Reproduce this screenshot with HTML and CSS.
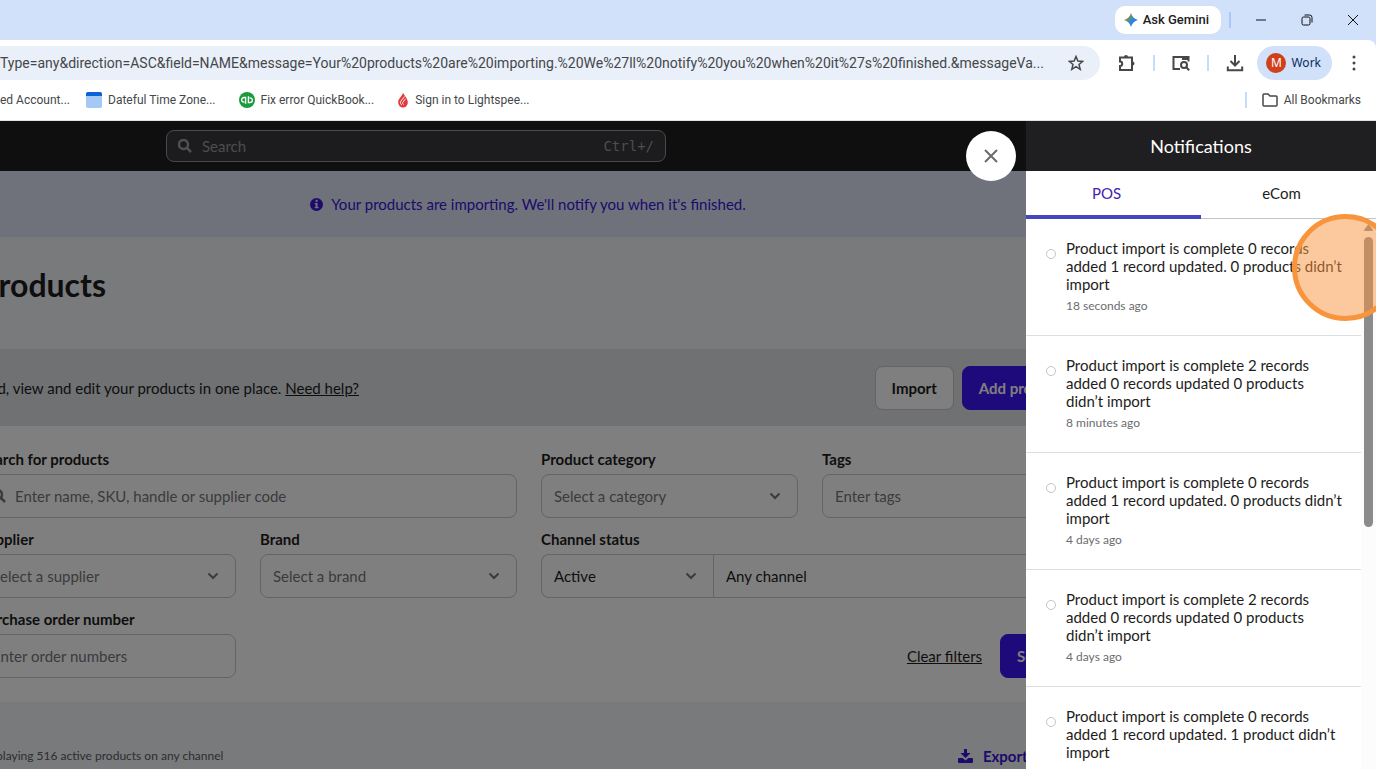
FILE: index.html
```html
<!DOCTYPE html>
<html lang="en">
<head>
  <meta charset="UTF-8">
  <meta name="viewport" content="width=device-width, initial-scale=1">
  <title>Products</title>
  <link rel="stylesheet" href="styles.css">
</head>
<body>

<!-- Browser window -->
<div class="titlebar">
  <button class="gemini">
    <svg width="14" height="14" viewBox="0 0 14 14">
      <defs>
        <linearGradient id="spark" x1="0" y1="0" x2="1" y2="1">
          <stop offset="0.2" stop-color="#e8556d"/>
          <stop offset="0.4" stop-color="#4f9a6a"/>
          <stop offset="0.550" stop-color="#2f86e8"/>
          <stop offset="1" stop-color="#2f62e8"/>
        </linearGradient>
      </defs>
      <path fill="url(#spark)" d="M7 0c1 3.600 3.400 6 7 7-3.600 1-6 3.400-7 7-1-3.600-3.400-6-7-7 3.600-1 6-3.400 7-7z"/>
    </svg>
    Ask Gemini
  </button>
  <span class="divider"></span>
  <div class="window-buttons">
    <button aria-label="Minimize"><svg width="12" height="12" viewBox="0 0 12 12"><path d="M1 6h10"/></svg></button>
    <button aria-label="Restore"><svg width="12" height="12" viewBox="0 0 12 12"><rect x="1" y="3" width="8" height="8" rx="1.500"/><path d="M3.500 1h5A2.500 2.500 0 0 1 11 3.500v5"/></svg></button>
    <button aria-label="Close window"><svg width="12" height="12" viewBox="0 0 12 12"><path d="M1 1l10 10M11 1L1 11"/></svg></button>
  </div>
</div>

<div class="toolbar">
  <div class="omnibox">
    <input type="text" aria-label="Address" value="Type=any&amp;direction=ASC&amp;field=NAME&amp;message=Your%20products%20are%20importing.%20We%27ll%20notify%20you%20when%20it%27s%20finished.&amp;messageVa...">
    <button aria-label="Bookmark this page"><svg width="16" height="16" viewBox="0 0 16 16"><path d="M8 1.500l1.900 4.500 4.800.4-3.700 3.100 1.200 4.800L8 11.700l-4.200 2.600L5 9.500 1.300 6.400 6.100 6z"/></svg></button>
  </div>
  <button aria-label="Extensions"><svg width="18" height="18" viewBox="0 0 18 18"><path d="M2 3.500h12v12.500H2v-4a2.200 2.200 0 0 0 0-4.400z"/><path class="solid" d="M6 3a2 2 0 0 1 4 0zM14.500 7.500a2 2 0 0 1 0 4z"/></svg></button>
  <span class="divider"></span>
  <button aria-label="Lens search"><svg width="18" height="18" viewBox="0 0 18 18"><path d="M8 15H1.500V3h15v4.500"/><path class="solid" d="M10 2h7v4h-7z"/><circle cx="12" cy="11" r="3"/><path d="M14.200 13.200l3 3"/></svg></button>
  <span class="divider"></span>
  <button aria-label="Downloads"><svg width="18" height="18" viewBox="0 0 18 18"><path d="M9 1v10M4.500 7L9 11.500 13.500 7M1.800 12.500v3.700h14.400v-3.700"/></svg></button>
  <button class="profile"><span class="avatar">M</span>Work</button>
  <button class="dots" aria-label="Menu"><svg width="18" height="18" viewBox="0 0 18 18"><circle cx="9" cy="3" r="1.500"/><circle cx="9" cy="9" r="1.500"/><circle cx="9" cy="15" r="1.500"/></svg></button>
</div>

<nav class="bookmarks">
  <a href="#">ed Account...</a>
  <a href="#">
    <svg width="16" height="16" viewBox="0 0 16 16"><rect width="16" height="16" rx="2" fill="#a5c8f5"/><path fill="#0b62d6" d="M2 0h12a2 2 0 0 1 2 2v2H0V2a2 2 0 0 1 2-2z"/></svg>
    Dateful Time Zone...
  </a>
  <a href="#">
    <svg width="16" height="16" viewBox="0 0 16 16"><circle cx="8" cy="8" r="8" fill="#1a9b3c"/><g fill="none" stroke="#fff" stroke-width="1.300"><path d="M6.600 11.800V5.500H5a2.300 2.300 0 0 0 0 4.700h.6"/><path d="M9.400 4.200v6.300H11a2.300 2.300 0 0 0 0-4.700h-.6"/></g></svg>
    Fix error QuickBook...
  </a>
  <a href="#">
    <svg width="12" height="16" viewBox="0 0 12 16"><path fill="#e03a3a" d="M6 .5c.5 2.500 4.800 5.500 4.800 9.700A4.800 5 0 0 1 6 15.500a4.800 5 0 0 1-4.800-5.300C1.200 6.500 5.500 4 6 .5z"/><path fill="none" stroke="#fff" stroke-width=".9" d="M7.500 4.500L3.800 9.200c-.8 1.800 0 3.300 1.200 4M8.500 6.800l-2.700 3.400c-.6 1.200 0 2 .9 2.300"/></svg>
    Sign in to Lightspee...
  </a>
  <span class="divider"></span>
  <a class="all" href="#">
    <svg width="16" height="14" viewBox="0 0 16 14"><path fill="none" stroke="#45474a" stroke-width="1.500" d="M1 2.500V12q0 1 1 1h12q1 0 1-1V4q0-1-1-1H8L6 1H2Q1 1 1 2.500z"/></svg>
    All Bookmarks
  </a>
</nav>

<!-- Web page -->
<div class="viewport">
  <div class="app">
    <header class="topbar">
      <label class="global-search">
        <svg width="14" height="14" viewBox="0 0 14 14"><circle cx="5.500" cy="5.500" r="4.500"/><path d="M9 9l4 4"/></svg>
        <input type="text" placeholder="Search" aria-label="Search">
        <kbd>Ctrl+/</kbd>
      </label>
    </header>

    <div class="banner">
      <svg width="13" height="13" viewBox="0 0 14 14"><circle cx="7" cy="7" r="7" fill="#3a14d8"/><path fill="#dfe4f7" d="M6 2h2.200v2.200H6zM5 5.400h3.200v4.400h1V11H5V9.800h1V6.600H5z"/></svg>
      Your products are importing. We'll notify you when it's finished.
    </div>

    <div class="page-head inset">
      <h1>Products</h1>
    </div>

    <div class="actions inset">
      <p>Add, view and edit your products in one place. <a href="#">Need help?</a></p>
      <button class="btn">Import</button>
      <button class="btn primary">Add product</button>
    </div>

    <form class="filters inset">
      <div class="field wide">
        <label for="q">Search for products</label>
        <div class="control with-icon">
          <svg width="14" height="14" viewBox="0 0 14 14"><circle cx="5.500" cy="5.500" r="4.500"/><path d="M9 9l4 4"/></svg>
          <input id="q" type="text" placeholder="Enter name, SKU, handle or supplier code">
        </div>
      </div>
      <div class="field">
        <label for="category">Product category</label>
        <div class="control">
          <select id="category" class="empty"><option>Select a category</option></select>
          <svg class="chevron" width="12" height="8" viewBox="0 0 12 8"><path d="M1.500 1.500L6 6l4.500-4.500"/></svg>
        </div>
      </div>
      <div class="field">
        <label for="tags">Tags</label>
        <div class="control"><input id="tags" type="text" placeholder="Enter tags"></div>
      </div>
      <div class="field">
        <label for="supplier">Supplier</label>
        <div class="control">
          <select id="supplier" class="empty"><option>Select a supplier</option></select>
          <svg class="chevron" width="12" height="8" viewBox="0 0 12 8"><path d="M1.500 1.500L6 6l4.500-4.500"/></svg>
        </div>
      </div>
      <div class="field">
        <label for="brand">Brand</label>
        <div class="control">
          <select id="brand" class="empty"><option>Select a brand</option></select>
          <svg class="chevron" width="12" height="8" viewBox="0 0 12 8"><path d="M1.500 1.500L6 6l4.500-4.500"/></svg>
        </div>
      </div>
      <div class="field wide">
        <label for="status">Channel status</label>
        <div class="joined">
          <div class="control">
            <select id="status"><option>Active</option></select>
            <svg class="chevron" width="12" height="8" viewBox="0 0 12 8"><path d="M1.500 1.500L6 6l4.500-4.500"/></svg>
          </div>
          <div class="control">
            <select aria-label="Channel"><option>Any channel</option></select>
          </div>
        </div>
      </div>
      <div class="field">
        <label for="po">Purchase order number</label>
        <div class="control"><input id="po" type="text" placeholder="Enter order numbers"></div>
      </div>
      <div class="submit-row">
        <a href="#">Clear filters</a>
        <button type="button" class="btn primary">Search</button>
      </div>
    </form>

    <div class="results inset">
      <span>Displaying 516 active products on any channel</span>
      <button class="export">
        <svg width="15" height="14" viewBox="0 0 15 14"><path fill="#3a14d8" d="M6 0h3v4h3.500L7.500 9l-5-5H6zM1 9h3.500l3 2.500 3-2.500H14q1 0 1 1v3q0 1-1 1H1q-1 0-1-1v-3q0-1 1-1z"/></svg>
        Export list
      </button>
    </div>
  </div>

  <div class="overlay"></div>

  <!-- Notifications drawer -->
  <aside class="drawer">
    <button class="close" aria-label="Close notifications">
      <svg width="14" height="14" viewBox="0 0 14 14"><path d="M1 1l12 12M13 1L1 13"/></svg>
    </button>
    <h2>Notifications</h2>
    <div class="tabs">
      <button class="active">POS</button>
      <button>eCom</button>
    </div>
    <div class="list-wrap">
      <ul>
        <li>
          <button class="dot" aria-label="Mark as unread"></button>
          <div><p>Product import is complete 0 records added 1 record updated. 0 products didn’t import</p><time>18 seconds ago</time></div>
        </li>
        <li>
          <button class="dot" aria-label="Mark as unread"></button>
          <div><p>Product import is complete 2 records added 0 records updated 0 products didn’t import</p><time>8 minutes ago</time></div>
        </li>
        <li>
          <button class="dot" aria-label="Mark as unread"></button>
          <div><p>Product import is complete 0 records added 1 record updated. 0 products didn’t import</p><time>4 days ago</time></div>
        </li>
        <li>
          <button class="dot" aria-label="Mark as unread"></button>
          <div><p>Product import is complete 2 records added 0 records updated 0 products didn’t import</p><time>4 days ago</time></div>
        </li>
        <li>
          <button class="dot" aria-label="Mark as unread"></button>
          <div><p>Product import is complete 0 records added 1 record updated. 1 product didn’t import</p><time>4 days ago</time></div>
        </li>
      </ul>
      <div class="scrollbar">
        <svg width="9" height="7" viewBox="0 0 9 7"><path fill="#8b8b8b" d="M4.500 0L9 6q0 1-1 1H1Q0 7 0 6z"/></svg>
        <span></span>
      </div>
    </div>
    <div class="click-marker"></div>
  </aside>
</div>

</body>
</html>
```

FILE: styles.css
```css
* { box-sizing: border-box; }

body {
  margin: 0;
  height: 100vh;
  display: flex;
  flex-direction: column;
  overflow: hidden;
  font-family: Lato, sans-serif;
  font-size: 15px;
  line-height: 20px;
  color: #1d1d20;
  background: #d1e1fa;
}

h1, h2, p, ul {
  margin: 0;
  padding: 0;
}

button {
  border: none;
  background: none;
  padding: 0;
  font: inherit;
  color: inherit;
  cursor: pointer;
}

input, select {
  font: inherit;
  color: inherit;
  border: none;
  background: none;
  outline: none;
  padding: 0;
  min-width: 0;
  appearance: none;
}

svg {
  display: block;
  flex: none;
}

a { color: inherit; }

/* Browser window */
.titlebar, .toolbar, .bookmarks {
  flex: none;
  display: flex;
  align-items: center;
  font-family: Roboto, sans-serif;
}

.titlebar {
  height: 40px;
  justify-content: flex-end;
}

.divider {
  width: 2px;
  height: 16px;
  background: #c7dcfb;
}

.titlebar .divider {
  margin: 0 7px 0 8px;
  background: #a8c7fa;
}

.gemini {
  display: flex;
  align-items: center;
  gap: 5px;
  height: 28px;
  padding: 0 12px 0 9px;
  border-radius: 10px;
  background: #fff;
  font-size: 13px;
  font-weight: 500;
}

.window-buttons { display: flex; }

.window-buttons button {
  width: 46px;
  height: 40px;
  display: grid;
  place-items: center;
}

.window-buttons svg {
  fill: none;
  stroke: #111;
}

.toolbar {
  height: 46px;
  background: #fff;
  border-top-right-radius: 8px;
  padding-right: 13px;
}

.toolbar svg {
  fill: none;
  stroke: #45474a;
  stroke-width: 2;
}

.toolbar svg .solid, .toolbar .dots svg {
  fill: #45474a;
  stroke: none;
}

.omnibox {
  flex: 1;
  display: flex;
  align-items: center;
  gap: 15px;
  height: 34px;
  padding-right: 16px;
  margin-right: 18px;
  background: #e9f0f9;
  border-radius: 0 17px 17px 0;
  font-size: 14px;
  color: #45474a;
}

.omnibox input {
  flex: 1;
  text-overflow: ellipsis;
}

.omnibox svg { stroke-width: 1.500; }

.toolbar > .divider { margin: 0 17px; }

.profile {
  display: flex;
  align-items: center;
  gap: 6px;
  height: 34px;
  margin: 0 13px;
  padding: 0 12px 0 10px;
  border-radius: 17px;
  background: #d1e1fa;
  color: #0a2a5e;
  font-family: "Noto Sans", sans-serif;
  font-size: 12px;
}

.avatar {
  width: 20px;
  height: 20px;
  border-radius: 50%;
  background: #d0401b;
  color: #fff;
}

/* pull the toolbar buttons together */
.toolbar .profile {
  gap: 5px;
  padding: 0 11px 0 9px;
}

.bookmarks {
  height: 35px;
  gap: 23px;
  padding: 0 15px 6px 0;
  background: #fff;
  border-bottom: 1px solid #dfe3e6;
  font-size: 12px;
  color: #45474a;
}

.bookmarks a {
  display: flex;
  align-items: center;
  gap: 6px;
  color: inherit;
  text-decoration: none;
  white-space: nowrap;
}

.bookmarks a:first-child { margin-right: -7px; }

.bookmarks .divider { margin: 0 -8px 0 auto; }

/* Web page */
.viewport {
  flex: 1;
  min-height: 0;
  position: relative;
  overflow: hidden;
  background: #f2f4f8;
}

/* the page is scrolled sideways, its left edge is out of view */
.inset {
  padding-left: 0;
  margin-left: -21px;
  padding-right: 297px;
}

.overlay {
  position: absolute;
  inset: 0;
  background: rgba(0, 0, 0, 0.5);
}

.topbar {
  height: 50px;
  display: flex;
  align-items: center;
  padding-left: 166px;
  background: #1f1f21;
}

.global-search {
  width: 500px;
  height: 32px;
  display: flex;
  align-items: center;
  gap: 10px;
  padding: 0 11px;
  border: 1px solid #949496;
  border-radius: 8px;
  background: #38373c;
}

.global-search svg, .with-icon svg {
  fill: none;
  stroke: #a0a0a4;
  stroke-width: 2.500;
}

.global-search input { flex: 1; }
.global-search input::placeholder { color: #9a9a9e; }

.global-search kbd {
  font-family: "DejaVu Sans Mono", monospace;
  font-size: 14px;
  color: #9a9a9e;
}

.banner {
  height: 66px;
  display: flex;
  align-items: center;
  justify-content: center;
  gap: 8px;
  padding-right: 320px;
  background: #dfe4f7;
  color: #3a14d8;
}

.page-head {
  height: 112px;
  padding-top: 28px;
}

h1 {
  font-size: 32px;
  line-height: 40px;
}

.actions {
  height: 77px;
  display: flex;
  align-items: center;
  gap: 8px;
  background: #e0e2e6;
}

.actions p { flex: 1; }

.btn {
  height: 44px;
  padding: 0 16px;
  border-radius: 8px;
  border: 1px solid #c8c9cc;
  background: #fff;
  font-weight: 700;
}

.btn.primary {
  border-color: #3e14f8;
  background: #3e14f8;
  color: #fff;
}

.filters {
  display: grid;
  grid-template-columns: repeat(4, 1fr);
  gap: 12px 24px;
  padding-top: 24px;
  padding-bottom: 24px;
  background: #fff;
}

.field { min-width: 0; }
.wide { grid-column: span 2; }

.field label {
  display: block;
  margin-bottom: 6px;
  line-height: 18px;
  font-weight: 700;
}

.control {
  display: grid;
  align-items: center;
  height: 44px;
  border: 1px solid #c8c9cc;
  border-radius: 8px;
}

.control input, .control select {
  grid-area: 1 / 1;
  width: 100%;
  height: 100%;
  padding: 0 12px;
}

.control ::placeholder, .control .empty { color: #75767a; }

.chevron {
  grid-area: 1 / 1;
  justify-self: end;
  margin-right: 16px;
  fill: none;
  stroke: #75767a;
  stroke-width: 2;
  pointer-events: none;
}

.control.with-icon {
  grid-template-columns: auto 1fr;
  padding-left: 12px;
}

.with-icon input {
  grid-area: auto;
  padding-left: 9px;
}

.with-icon svg { stroke: #75767a; }

.joined {
  display: grid;
  grid-template-columns: 172px 1fr;
}

.joined .control:first-child {
  border-radius: 8px 0 0 8px;
  border-right: none;
}

.joined .control:last-child { border-radius: 0 8px 8px 0; }

.submit-row {
  grid-column: span 3;
  display: flex;
  justify-content: flex-end;
  align-items: flex-end;
  gap: 18px;
}

.submit-row a { line-height: 44px; }

.results {
  display: flex;
  align-items: center;
  justify-content: space-between;
  padding-top: 42px;
  font-size: 12px;
  line-height: 24px;
  color: #5b5c60;
}

.export {
  display: flex;
  align-items: center;
  gap: 10px;
  padding: 0 28px;
  font-size: 15px;
  font-weight: 700;
  color: #3a14d8;
}

/* Notifications drawer */
.drawer {
  position: absolute;
  top: 0;
  right: 0;
  bottom: 0;
  width: 350px;
  display: flex;
  flex-direction: column;
  background: #fff;
}

.close {
  position: absolute;
  top: 10px;
  left: -60px;
  width: 50px;
  height: 50px;
  display: grid;
  place-items: center;
  border-radius: 50%;
  background: #fff;
}

.close svg {
  stroke: #6b6b70;
  stroke-width: 2;
}

h2 {
  flex: none;
  background: #1f1e21;
  color: #fff;
  font-size: 18px;
  font-weight: 400;
  line-height: 50px;
  text-align: center;
}

.tabs {
  flex: none;
  display: grid;
  grid-template-columns: 1fr 1fr;
  height: 48px;
}

.tabs button {
  padding: 0 14px 3px 0;
  border-bottom: 1px solid #c4c4c8;
}

.tabs .active {
  border-bottom: 4px solid #4545c4;
  padding-bottom: 0;
  color: #4322b0;
}

.list-wrap {
  flex: 1;
  min-height: 0;
  display: flex;
}

ul {
  flex: 1;
  list-style: none;
  overflow: hidden;
}

li {
  display: flex;
  align-items: flex-start;
  gap: 10px;
  padding: 20px 18px 20px 20px;
  border-bottom: 1px solid #dedee2;
  line-height: 18px;
}

.dot {
  flex: none;
  width: 10px;
  height: 10px;
  margin-top: 10px;
  border: 1px solid #c4c4c8;
  border-radius: 50%;
}

time {
  display: block;
  margin-top: 4px;
  font-size: 12px;
  color: #6b6b70;
}

.scrollbar {
  flex: none;
  width: 15px;
  display: flex;
  flex-direction: column;
  align-items: center;
  gap: 6px;
  padding-top: 5px;
  background: #fcfcfc;
}

.scrollbar span {
  width: 9px;
  height: 290px;
  border-radius: 5px;
  background: #8b8b8b;
}

.click-marker {
  position: absolute;
  top: 93px;
  right: -23px;
  width: 107px;
  height: 107px;
  border: 5px solid #f7943c;
  border-radius: 50%;
  background: rgba(247, 148, 60, 0.5);
  pointer-events: none;
}
```
